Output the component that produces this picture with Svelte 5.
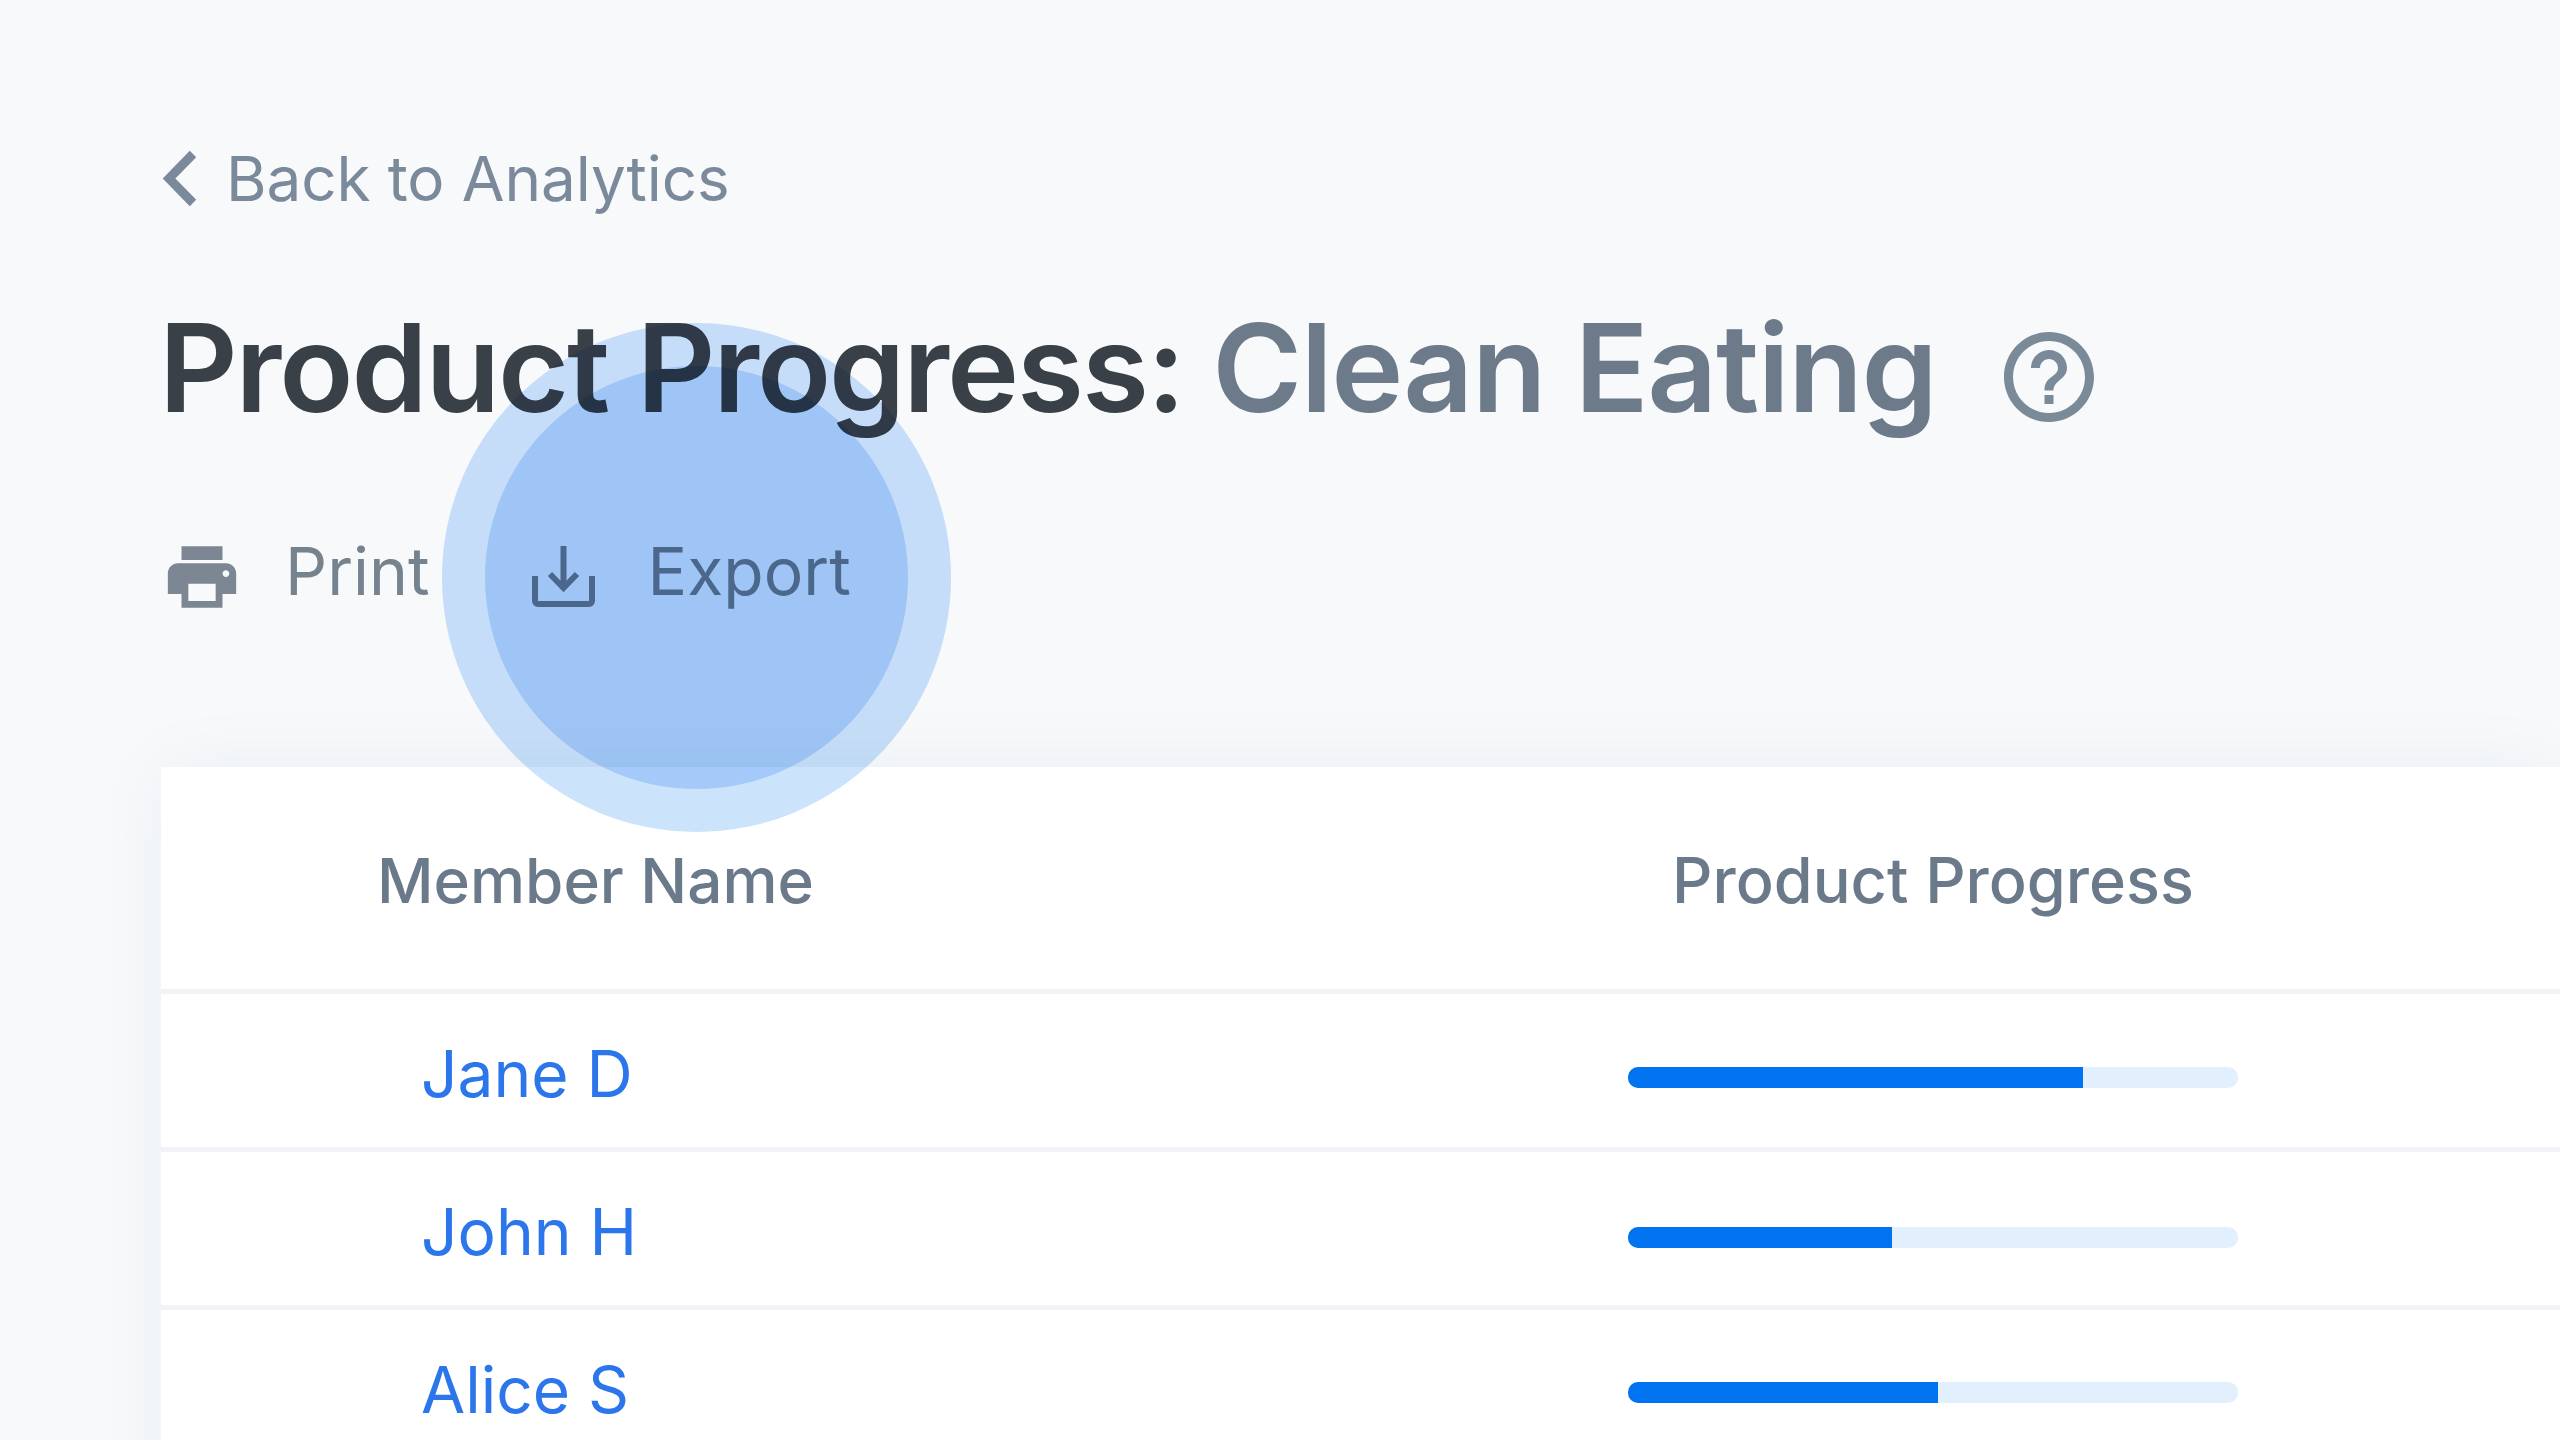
<script>
	const members = [
		{ name: 'Jane D', progress: 74.6, barTop: 13 },
		{ name: 'John H', progress: 43.3, barTop: 17 },
		{ name: 'Alice S', progress: 50.9, barTop: 12 }
	];
</script>

<div class="page">
	<a class="back" href="#analytics">
		<svg class="chevron" viewBox="0 0 35 57" width="35" height="57">
			<path d="M31 4 L7 28.5 L31 53" fill="none" stroke="currentColor" stroke-width="9" />
		</svg>
		<span>Back to Analytics</span>
	</a>

	<div class="heading">
		<h1>Product Progress: <span class="product">Clean Eating</span></h1>
		<svg class="help" viewBox="0 0 24 24" width="108" height="108">
			<path
				fill="currentColor"
				d="M11 18h2v-2h-2v2zm1-16C6.48 2 2 6.48 2 12s4.48 10 10 10 10-4.48 10-10S17.52 2 12 2zm0 18c-4.41 0-8-3.59-8-8s3.59-8 8-8 8 3.59 8 8-3.59 8-8 8zm0-14c-2.21 0-4 1.79-4 4h2c0-1.1.9-2 2-2s2 .9 2 2c0 2-3 1.75-3 5h2c0-2.25 3-2.5 3-5 0-2.21-1.79-4-4-4z"
			/>
		</svg>
	</div>

	<div class="actions">
		<button class="action print">
			<svg viewBox="0 0 24 24" width="82" height="82">
				<path
					fill="currentColor"
					d="M19 8H5c-1.66 0-3 1.34-3 3v6h4v4h12v-4h4v-6c0-1.66-1.34-3-3-3zm-3 11H8v-5h8v5zm3-7c-.55 0-1-.45-1-1s.45-1 1-1 1 .45 1 1-.45 1-1 1zm-1-9H6v4h12V3z"
				/>
			</svg>
			<span>Print</span>
		</button>
		<button class="action export">
			<svg viewBox="0 0 63 61" width="63" height="61">
				<path
					d="M3 30 V55 a3 3 0 0 0 3 3 H57 a3 3 0 0 0 3-3 V30 M31.5 0 V42 M18 28 L31.5 42 L45 28"
					fill="none"
					stroke="currentColor"
					stroke-width="6"
				/>
			</svg>
			<span>Export</span>
		</button>
		<div class="tap">
			<div class="tap-inner"></div>
		</div>
	</div>

	<div class="card">
		<div class="row head">
			<div class="name-head">Member Name</div>
			<div class="progress-head">Product Progress</div>
		</div>
		{#each members as m}
			<div class="row member">
				<a class="name" href="#member">{m.name}</a>
				<div class="track" style="margin-top: {m.barTop}px">
					<div class="fill" style="width: {m.progress}%"></div>
				</div>
			</div>
		{/each}
	</div>
</div>

<style>
	:global(body) {
		background: #f7f9fb;
		overflow: hidden;
	}
	.page {
		position: relative;
		height: 1440px;
		box-sizing: border-box;
		padding: 148px 0 0 161px;
		overflow: hidden;
		font-family: Inter, 'Noto Sans', sans-serif;
		color: #6c7a8a;
	}
	.back {
		display: flex;
		align-items: center;
		height: 60px;
		font-size: 62px;
		letter-spacing: -0.1px;
		color: #7a8a9a;
		text-decoration: none;
	}
	.chevron {
		margin-left: 1px;
		margin-right: 29px;
	}
	.heading {
		display: flex;
		align-items: center;
		margin-top: 90px;
		margin-left: -2px;
		height: 140px;
	}
	h1 {
		margin: 0;
		font-size: 122px;
		font-weight: 600;
		line-height: 140px;
		letter-spacing: -2.1px;
		color: #3a4048;
		white-space: nowrap;
	}
	.product {
		letter-spacing: -1.35px;
		color: #6c7a8a;
	}
	.help {
		margin-left: 58px;
		margin-top: 18px;
		color: #7a8a99;
	}
	.actions {
		position: relative;
		display: flex;
		align-items: center;
		margin-top: 93px;
		height: 80px;
	}
	.action {
		display: flex;
		align-items: center;
		padding: 0;
		border: 0;
		background: none;
		font: inherit;
		font-size: 66px;
		color: #75838f;
	}
	.action svg {
		margin-top: 11px;
	}
	.print span {
		margin-left: 42px;
	}
	.print svg {
		color: #7c8793;
	}
	.export {
		margin-left: 102px;
	}
	.export span {
		margin-left: 53px;
	}
	/* tap indicator from the screen recording, tints whatever is under it */
	.tap {
		position: absolute;
		left: 281px;
		top: -208px;
		display: flex;
		align-items: center;
		justify-content: center;
		width: 509px;
		height: 509px;
		border-radius: 50%;
		background: #cce3fc;
		mix-blend-mode: multiply;
	}
	.tap-inner {
		width: 423px;
		height: 423px;
		border-radius: 50%;
		background: #cce3fc;
		mix-blend-mode: multiply;
	}
	.card {
		margin-top: 156px;
		width: 2399px;
		height: 900px;
		background: #fff;
		box-shadow: 0 0 70px rgba(40, 50, 70, 0.05);
	}
	.row {
		display: grid;
		grid-template-columns: 1467px 610px;
		align-items: center;
		box-sizing: border-box;
		border-bottom: 5px solid #f1f3f6;
	}
	.head {
		height: 227px;
		padding-top: 4px;
		font-weight: 500;
		color: #6b7a8a;
	}
	.name-head {
		padding-left: 216px;
		font-size: 62px;
	}
	.progress-head {
		font-size: 63px;
		text-align: center;
		white-space: nowrap;
	}
	.member {
		height: 158px;
	}
	.name {
		padding-left: 260px;
		padding-top: 6px;
		font-size: 64px;
		color: #2b76eb;
		text-decoration: none;
	}
	.track {
		height: 21px;
		border-radius: 10px;
		background: #e2effd;
		overflow: hidden;
	}
	.fill {
		height: 100%;
		background: #0073f0;
	}
</style>
